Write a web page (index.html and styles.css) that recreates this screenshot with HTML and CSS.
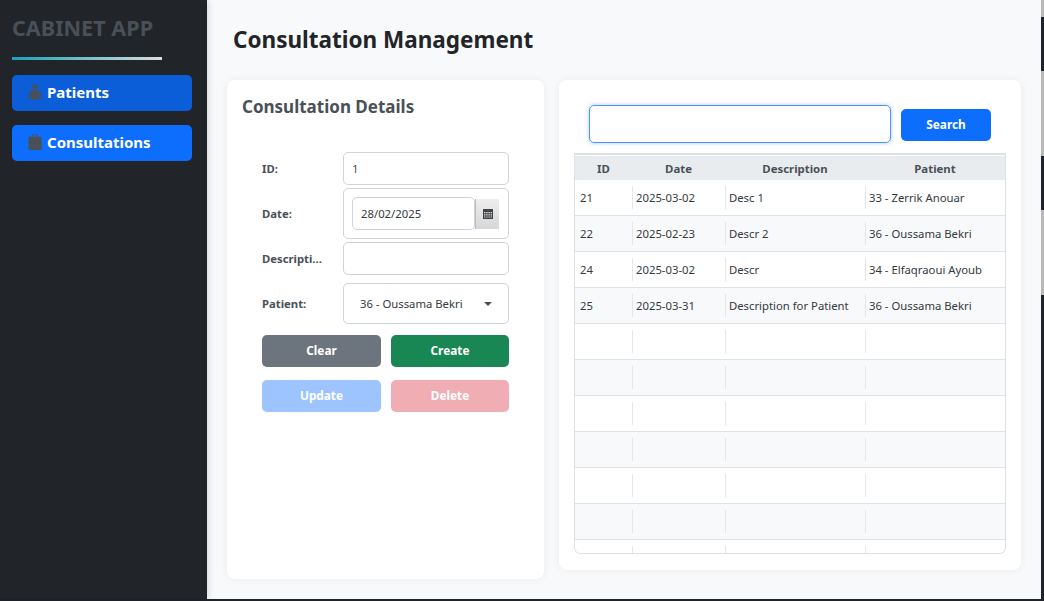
FILE: index.html
```html
<!DOCTYPE html>
<html lang="en">
<head>
<meta charset="utf-8">
<title>Cabinet App</title>
<link rel="stylesheet" href="styles.css">
</head>
<body>
<div class="window">
	<div class="app">
		<aside class="sidebar">
			<div class="brand">CABINET APP</div>
			<a href="#" class="nav-btn nav-active">
				<svg class="nav-icon" width="14" height="16" viewBox="0 0 16 18"><circle cx="8" cy="3.200" r="3"/><path d="M4 7h8c1.300 0 2.100.7 2.400 1.800l1.100 8.200h-2.700l-.5-6.200h-.6V18H4.300v-7.200h-.6L3.200 17H.5l1.100-8.200C1.900 7.700 2.700 7 4 7z"/></svg>
				Patients
			</a>
			<a href="#" class="nav-btn">
				<svg class="nav-icon" width="14" height="18" viewBox="0 0 16 18"><path d="M.5 3h3.700V1.800C4.200.8 5 .2 6 .2h4c1 0 1.800.6 1.800 1.600V3h3.700v15H.5zm4.800 0h5.400V1.900c0-.4-.2-.6-.6-.6H5.900c-.4 0-.6.200-.6.600z"/></svg>
				Consultations
			</a>
		</aside>
		<main class="main">
			<h1 class="page-title">Consultation Management</h1>
			<div class="panels">
				<section class="card details">
					<h2 class="card-title">Consultation Details</h2>
					<div class="form">
						<div class="form-row row-id">
							<label>ID:</label>
							<div class="field field-text">1</div>
						</div>
						<div class="form-row row-date">
							<label>Date:</label>
							<div class="field field-date">
								<div class="date-input">28/02/2025</div>
								<div class="date-btn">
									<svg width="10" height="10" viewBox="0 0 10 10"><rect width="10" height="10" fill="#3f4448"/><path d="M1 3h1.500v1.200H1zM3.200 3h1.500v1.200H3.200zM5.400 3h1.500v1.200H5.400zM7.600 3h1.400v1.200H7.600zM1 5.200h1.500v1.200H1zM3.200 5.200h1.500v1.200H3.200zM5.400 5.200h1.500v1.200H5.400zM7.600 5.200h1.400v1.200H7.600zM1 7.400h1.500v1.200H1zM3.200 7.400h1.500v1.200H3.200zM5.400 7.400h1.500v1.200H5.400zM7.600 7.400h1.400v1.200H7.600z" fill="#d8d8d8"/></svg>
								</div>
							</div>
						</div>
						<div class="form-row row-desc">
							<label>Descripti...</label>
							<div class="field field-text"></div>
						</div>
						<div class="form-row row-patient">
							<label>Patient:</label>
							<div class="field field-select">
								<span>36 - Oussama Bekri</span>
								<i class="caret"></i>
							</div>
						</div>
						<div class="btn-grid">
							<button class="btn btn-grey">Clear</button>
							<button class="btn btn-green">Create</button>
							<button class="btn btn-blue btn-off">Update</button>
							<button class="btn btn-red btn-off">Delete</button>
						</div>
					</div>
				</section>
				<section class="card list">
					<div class="search-row">
						<div class="search-input"></div>
						<button class="btn btn-blue search-btn">Search</button>
					</div>
					<div class="table-wrap">
						<table class="grid">
							<colgroup>
								<col class="col-id"><col class="col-date"><col class="col-desc"><col class="col-patient">
							</colgroup>
							<thead>
								<tr><th>ID</th><th>Date</th><th>Description</th><th>Patient</th></tr>
							</thead>
							<tbody>
								<tr><td><div>21</div></td><td><div>2025-03-02</div></td><td><div>Desc 1</div></td><td><div>33 - Zerrik Anouar</div></td></tr>
								<tr><td><div>22</div></td><td><div>2025-02-23</div></td><td><div>Descr 2</div></td><td><div>36 - Oussama Bekri</div></td></tr>
								<tr><td><div>24</div></td><td><div>2025-03-02</div></td><td><div>Descr</div></td><td><div>34 - Elfaqraoui Ayoub</div></td></tr>
								<tr><td><div>25</div></td><td><div>2025-03-31</div></td><td><div>Description for Patient</div></td><td><div>36 - Oussama Bekri</div></td></tr>
								<tr><td><div></div></td><td><div></div></td><td><div></div></td><td><div></div></td></tr>
								<tr><td><div></div></td><td><div></div></td><td><div></div></td><td><div></div></td></tr>
								<tr><td><div></div></td><td><div></div></td><td><div></div></td><td><div></div></td></tr>
								<tr><td><div></div></td><td><div></div></td><td><div></div></td><td><div></div></td></tr>
								<tr><td><div></div></td><td><div></div></td><td><div></div></td><td><div></div></td></tr>
								<tr><td><div></div></td><td><div></div></td><td><div></div></td><td><div></div></td></tr>
								<tr><td><div></div></td><td><div></div></td><td><div></div></td><td><div></div></td></tr>
							</tbody>
						</table>
					</div>
				</section>
			</div>
		</main>
	</div>
	<div class="edge">
		<i class="e1"></i><i class="e2"></i><i class="e3"></i><i class="e4"></i><i class="e5"></i>
	</div>
</div>
</body>
</html>
```

FILE: styles.css
```css
html, body {
	margin:0;
	padding:0;
	height:100%;
	overflow:hidden;
	background:#202329;}
body {
	font-family:"Noto Sans", "Open Sans", sans-serif;
	font-size:11.3px;
	color:#212529;}
.window {
	display:flex;
	width:1044px;
	height:601px;}
.app {
	display:flex;
	width:1041px;
	height:599px;
	background:#f8f9fa;}
.edge {
	display:flex;
	flex-direction:column;
	width:3px;}
.edge i {display:block;}
.edge .e1, .edge .e3, .edge .e5 {background:#b9b9b9;}
.edge .e1 {height:17px;}
.edge .e2, .edge .e4 {height:54px; background:#202329;}
.edge .e3 {height:85px;}
.edge .e5 {height:85px;}

/* sidebar */
.sidebar {
	position:relative;
	box-sizing:border-box;
	width:207px;
	flex:none;
	padding:12px 15px 0 12px;
	background:#212529;
	box-shadow:2px 0 6px rgba(0,0,0,.12);}
.brand {
	width:150px;
	height:45px;
	margin-bottom:15px;
	font-size:21.6px;
	font-weight:700;
	line-height:32px;
	color:#495057;
	white-space:nowrap;
	border-bottom:3px solid;
	border-image:linear-gradient(to right, #17a2b8, #dddddd) 1;}
.nav-btn {
	display:flex;
	align-items:center;
	gap:5px;
	box-sizing:border-box;
	height:36px;
	margin-bottom:14px;
	padding:0 0 2px 16px;
	border-radius:5px;
	background:#0d6efd;
	color:#fff;
	font-size:15px;
	font-weight:700;
	text-decoration:none;}
.nav-active {background:#0b5ed7;}
.nav-icon {fill:#495057; flex:none;}

/* main */
.main {
	flex:1;
	padding:0 20px 0 20px;}
.page-title {
	margin:0;
	padding:22px 0 0 6px;
	height:80px;
	box-sizing:border-box;
	font-size:22.5px;
	line-height:36px;
	font-weight:700;}
.panels {
	display:flex;
	gap:15px;}
.card {
	box-sizing:border-box;
	background:#fff;
	border-radius:8px;
	box-shadow:0 0 8px rgba(0,0,0,.06);}
.details {
	width:317px;
	height:499px;
	padding:14px 35px 0 35px;}
.list {
	width:462px;
	height:490px;
	padding:25px 15px 0;}
.card-title {
	margin:0 0 32px -20px;
	font-size:17px;
	line-height:26px;
	font-weight:700;
	color:#495057;}

/* form */
.form-row {
	display:flex;
	align-items:center;}
.form-row label {
	width:81px;
	flex:none;
	font-weight:700;
	color:#495057;}
.field {
	box-sizing:border-box;
	width:166px;
	border:1px solid #ced4da;
	border-radius:5px;
	background:#fff;}
.field-text {
	height:33px;
	padding-left:8px;
	line-height:31px;
	color:#495057;}
.row-id {margin-bottom:3px;}
.row-date {margin-bottom:3px;}
.row-desc {margin-bottom:8px;}
.row-patient {margin-bottom:11px;}
.field-date {
	display:flex;
	align-items:center;
	height:51px;
	padding-left:8px;}
.date-input {
	box-sizing:border-box;
	width:123px;
	height:33px;
	padding-left:8px;
	border:1px solid #ced4da;
	border-radius:5px;
	line-height:31px;
	color:#343a40;}
.date-btn {
	display:flex;
	align-items:center;
	justify-content:center;
	width:24px;
	height:30px;
	border-left:1px solid #bbb;
	box-sizing:border-box;
	background:linear-gradient(#eeeeee, #d6d6d6);}
.field-select {
	display:flex;
	align-items:center;
	justify-content:space-between;
	height:41px;
	padding:0 16px 0 16px;
	color:#343a40;}
.caret {
	width:0;
	height:0;
	border-left:4.5px solid transparent;
	border-right:4.5px solid transparent;
	border-top:4px solid #495057;}
.btn-grid {
	display:grid;
	grid-template-columns:119px 118px;
	gap:13px 10px;}
.btn {
	height:32px;
	padding:0 0 2px;
	border:0;
	border-radius:5px;
	color:#fff;
	font-family:inherit;
	font-size:11.8px;
	font-weight:700;}
.btn-grey {background:#6c757d;}
.btn-green {background:#198754;}
.btn-blue {background:#0d6efd;}
.btn-red {background:#dc3545;}
.btn-off {opacity:.4;}

/* list */
.search-row {
	display:flex;
	align-items:center;
	gap:10px;
	height:38px;
	margin:0 15px 10px;}
.search-input {
	box-sizing:border-box;
	width:302px;
	height:38px;
	border:1px solid #4d90fe;
	border-radius:5px;
	box-shadow:0 0 4px rgba(13,110,253,.35);}
.search-btn {width:90px; margin-top:2px;}
.table-wrap {
	box-sizing:border-box;
	width:432px;
	height:401px;
	overflow:hidden;
	border:1px solid #dee2e6;
	border-top-width:2px;
	border-radius:0 0 6px 6px;}
.grid {
	width:100%;
	table-layout:fixed;
	border-collapse:collapse;
	border-top:1px solid #fff;}
.col-id {width:57px;}
.col-date {width:93px;}
.col-desc {width:140px;}
.grid th {
	height:24px;
	padding:0;
	background:#e9ecef;
	font-size:11.4px;
	font-weight:700;
	color:#495057;}
.grid td {
	height:35px;
	padding:6px 0 6px;
	box-sizing:border-box;
	border-bottom:1px solid #dee2e6;
	color:#343a40;}
.grid tr:nth-child(even) td {background:#f8f9fa;}
.grid td div {
	height:23px;
	padding-left:3px;
	line-height:23px;
	border-left:1px solid #e4e6e9;
	white-space:nowrap;}
.grid td:first-child div {padding-left:5px; border-left:0;}
```
